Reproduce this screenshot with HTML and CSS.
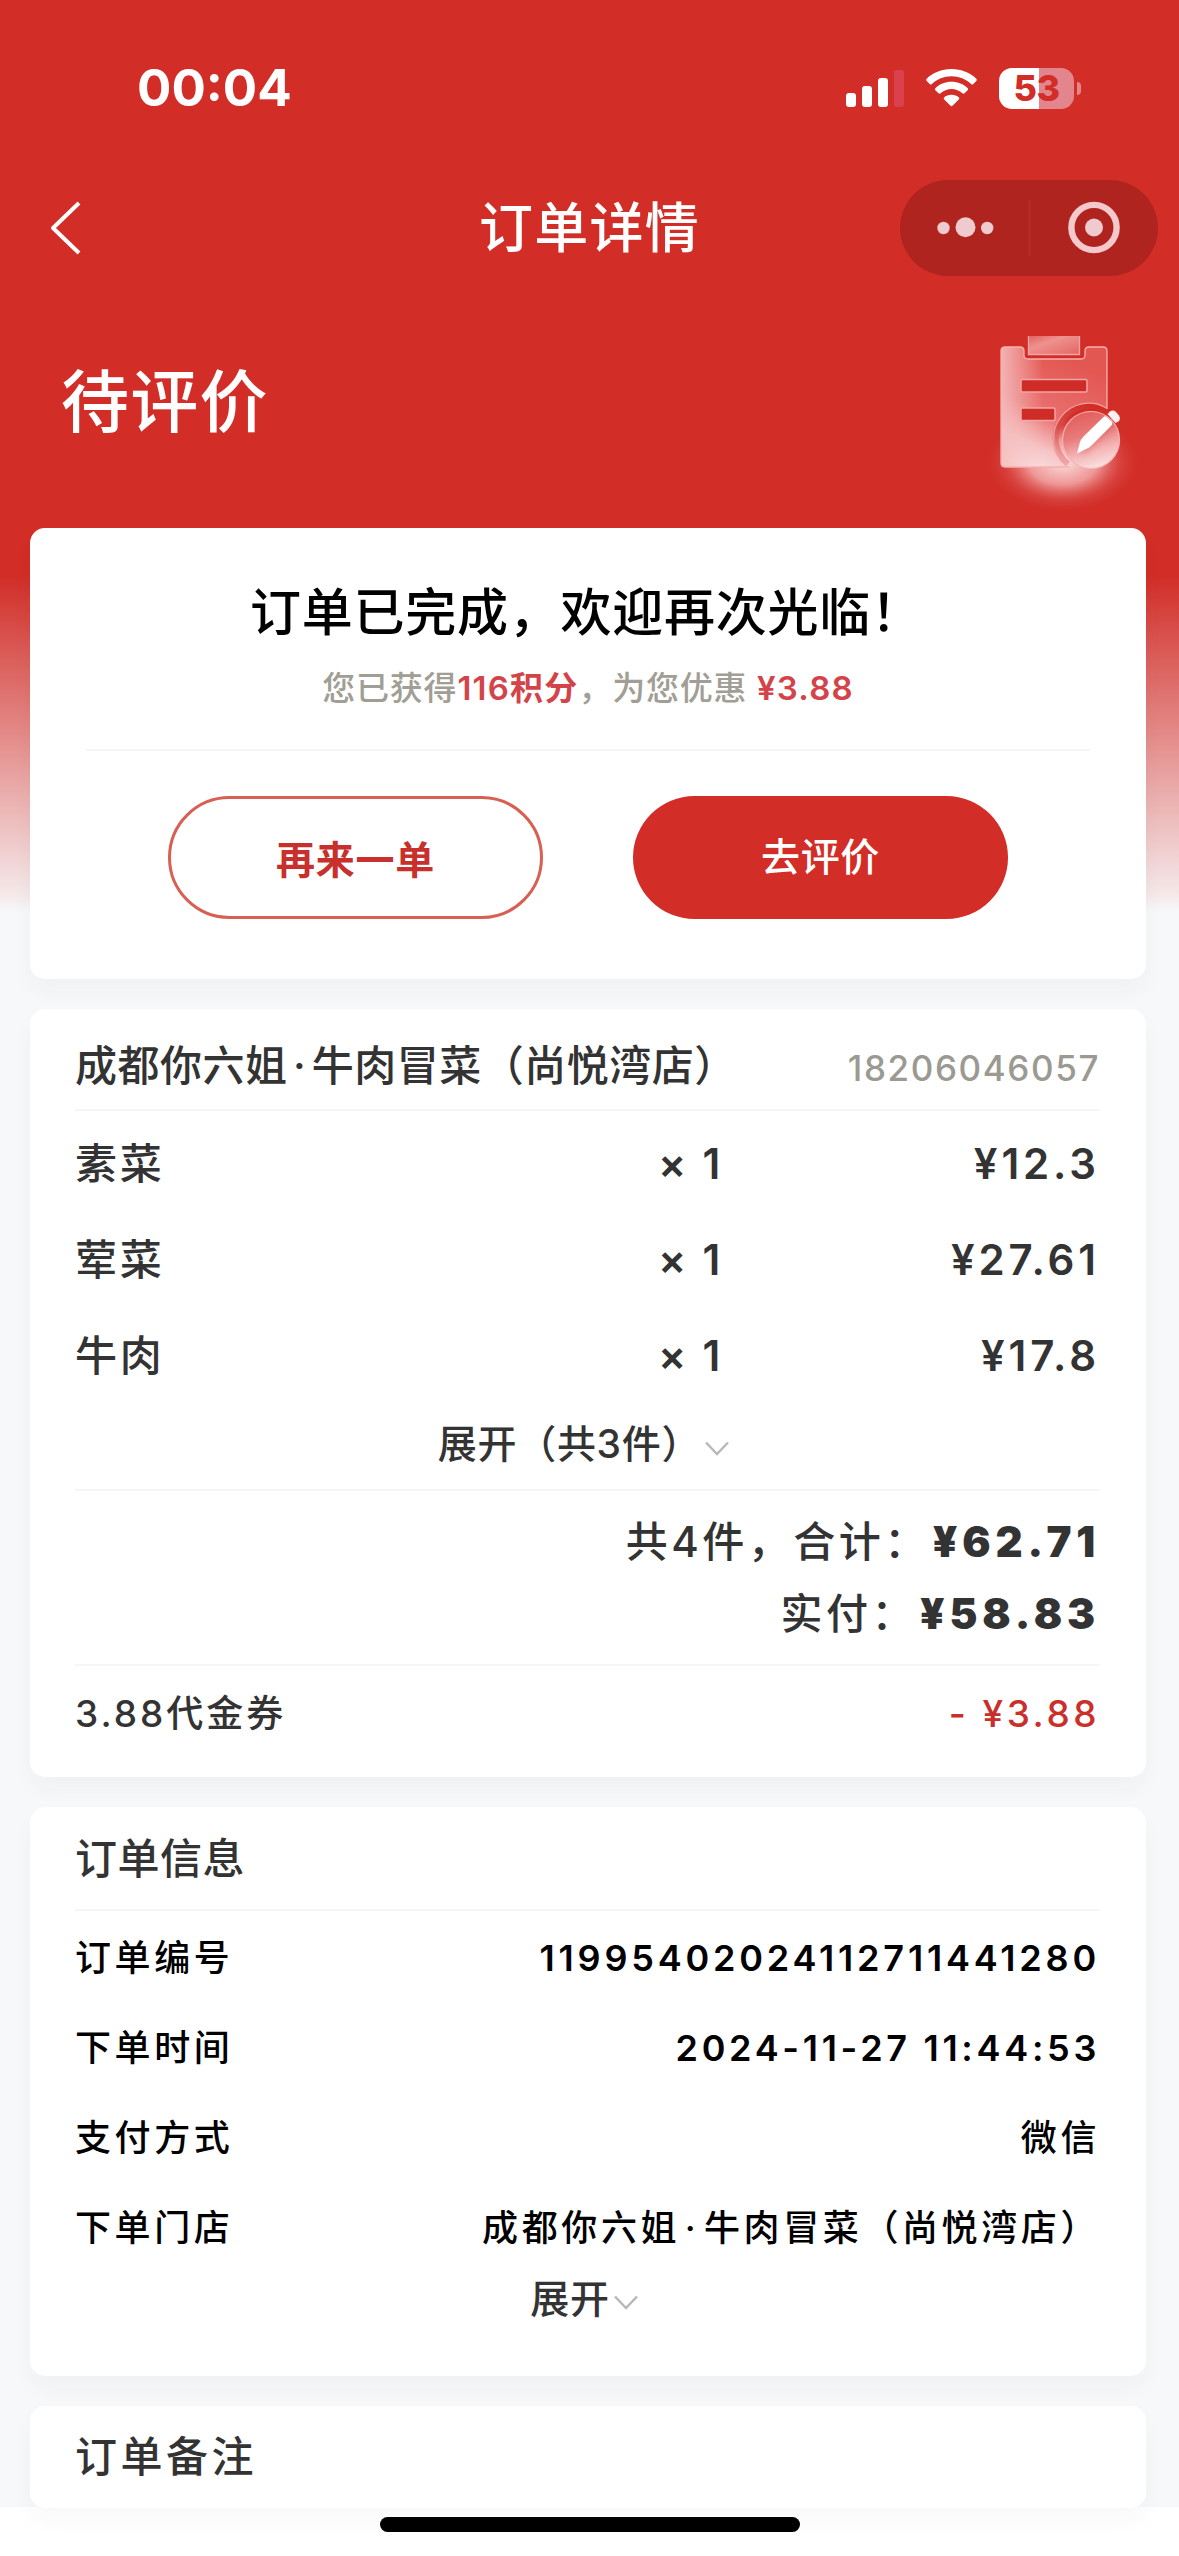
FILE: index.html
```html
<!DOCTYPE html>
<html lang="zh-CN">
<head>
<meta charset="utf-8">
<title>订单详情</title>
<link rel="stylesheet" href="styles.css">
</head>
<body>
<div class="screen">
  <header class="status-bar">
    <span class="clock">00:04</span>
    <div class="status-icons">
      <svg class="signal" width="58" height="37" viewBox="0 0 58 37" fill="#fff">
        <rect x="0" y="23" width="10" height="14" rx="3"/>
        <rect x="16" y="16" width="10" height="21" rx="3"/>
        <rect x="32" y="8" width="10" height="29" rx="3"/>
        <rect x="48" y="0" width="10" height="37" rx="3" fill="#d9424d"/>
      </svg>
      <svg class="wifi" width="51" height="38" viewBox="0 0 51 38" fill="#fff">
        <path d="M25.500 0C35.500 0 44.300 3.800 50.300 9.700Q51.300 10.800 50.300 11.900L47.300 15Q46.200 16 45.100 15C40 10.200 33.100 7.300 25.500 7.300S11 10.200 5.900 15Q4.800 16 3.700 15L.7 11.900Q-.3 10.800.7 9.700C6.700 3.800 15.500 0 25.500 0Z"/>
        <path d="M25.500 12.800C31.900 12.800 37.600 15.200 41.700 19.200Q42.600 20.200 41.600 21.200L38.500 24.300Q37.400 25.200 36.400 24.300C33.500 21.700 29.700 20.100 25.500 20.100S17.500 21.700 14.600 24.300Q13.600 25.200 12.500 24.300L9.400 21.200Q8.400 20.200 9.300 19.200C13.400 15.200 19.100 12.800 25.500 12.800Z"/>
        <path d="M25.500 25.700C28.500 25.700 31 26.700 32.800 28.300Q33.900 29.400 32.800 30.500L26.700 36.600Q25.500 37.700 24.300 36.600L18.200 30.500Q17.100 29.400 18.200 28.300C20 26.700 22.500 25.700 25.500 25.700Z"/>
      </svg>
      <div class="battery"><span class="battery-level">53</span><i class="battery-nub"></i></div>
    </div>
  </header>

  <nav class="nav-bar">
    <svg class="back" width="34" height="56" viewBox="0 0 34 56" fill="none" stroke="#fff" stroke-width="4" stroke-linejoin="round"><path d="M31 3 5 28 31 53"/></svg>
    <h1 class="nav-title">订单详情</h1>
    <div class="capsule">
      <svg width="258" height="96" viewBox="0 0 258 96">
        <g fill="#efcace"><circle cx="43.500" cy="48" r="6.200"/><circle cx="65.500" cy="47.300" r="10"/><circle cx="87.200" cy="48" r="6.200"/><circle cx="194" cy="47.500" r="9"/></g>
        <circle cx="194" cy="47.500" r="22.600" fill="none" stroke="#f4c9cc" stroke-width="6.400"/>
        <path d="M129.500 20V76" stroke="#b92b27" stroke-width="2"/>
      </svg>
    </div>
  </nav>

  <section class="hero">
    <h2 class="hero-title">待评价</h2>
    <svg class="hero-icon" width="200" height="200" viewBox="0 0 200 200">
      <defs>
        <linearGradient id="board" x1=".25" y1="1" x2=".6" y2=".1">
          <stop offset="0" stop-color="#fae0e1"/><stop offset=".2" stop-color="#f6c4c5"/><stop offset=".5" stop-color="#e96f6e"/><stop offset="1" stop-color="#e35752"/>
        </linearGradient>
        <linearGradient id="edge" x1="0" y1="0" x2="1" y2="0">
          <stop offset="0" stop-color="#f5bcbd" stop-opacity=".9"/><stop offset=".4" stop-color="#f5bcbd" stop-opacity="0"/>
        </linearGradient>
        <linearGradient id="clip" x1="0" y1="0" x2="1" y2="1">
          <stop offset="0" stop-color="#e4605e"/><stop offset=".35" stop-color="#ee9290"/><stop offset="1" stop-color="#e46661"/>
        </linearGradient>
        <linearGradient id="badge" x1=".3" y1="0" x2=".6" y2="1">
          <stop offset="0" stop-color="#e25c5a"/><stop offset=".4" stop-color="#e87a79"/><stop offset=".7" stop-color="#f4b4b5"/><stop offset="1" stop-color="#fbe2e3"/>
        </linearGradient>
        <linearGradient id="groove" x1=".7" y1="0" x2=".2" y2="1">
          <stop offset="0" stop-color="#d22d27"/><stop offset=".55" stop-color="#d94c49"/><stop offset="1" stop-color="#f0aaaa"/>
        </linearGradient>
        <radialGradient id="glow"><stop offset="0" stop-color="#fbe0e0"/><stop offset=".45" stop-color="#f3abab" stop-opacity=".85"/><stop offset=".75" stop-color="#e57372" stop-opacity=".3"/><stop offset="1" stop-color="#dc4a49" stop-opacity="0"/></radialGradient>
        <filter id="soft" x="-30%" y="-30%" width="160%" height="160%"><feGaussianBlur stdDeviation="3"/></filter>
        <mask id="cutout">
          <rect width="200" height="200" fill="#fff"/>
          <circle cx="131.500" cy="130" r="35" fill="#000"/>
        </mask>
      </defs>
      <ellipse cx="103" cy="152" rx="76" ry="50" fill="url(#glow)"/>
      <g mask="url(#cutout)">
        <path d="M45 37H60Q64 37 64 41V45Q64 49 68 49H121Q125 49 125 45V41Q125 37 129 37H143Q147 37 147 41V157H45Q41 157 41 153V41Q41 37 45 37Z" fill="url(#board)"/>
        <path d="M45 37H60Q64 37 64 41V45Q64 49 68 49H121Q125 49 125 45V41Q125 37 129 37H143Q147 37 147 41V157H45Q41 157 41 153V41Q41 37 45 37Z" fill="url(#edge)" stroke="#f4b1b0" stroke-width="1.300"/>
        <rect x="61" y="69.500" width="66" height="12.500" rx="1.500" fill="#cf2c28" stroke="#f3a5a4" stroke-width="1.500"/>
        <rect x="61" y="98" width="34" height="12.500" rx="1.500" fill="#cf2c28" stroke="#f3a5a4" stroke-width="1.500"/>
      </g>
      <path d="M108 154A32 32 0 0 1 148 103" fill="none" stroke="url(#groove)" stroke-width="6"/>
      <path d="M106 155A35 35 0 0 1 147 98.500" fill="none" stroke="#f0a09f" stroke-width="1.300"/>
      <rect x="68.500" y="26" width="51" height="18.500" fill="url(#clip)"/>
      <path d="M68.500 26V44.500H119.500V26" fill="none" stroke="#f3a5a4" stroke-width="1.300"/>
      <circle cx="131" cy="130" r="28.500" fill="url(#badge)" stroke="#f4b5b5" stroke-width="1.200"/>
      <path d="M120 142 148 113 152 117 124 144Z" fill="#d23c39" opacity=".45" filter="url(#soft)"/>
      <path d="M117 143.500 120 132Q121 129 124 126L144 106.500Q146 105.500 148 108L152 112Q153 114 151 116L131 136Q129 138 126 139Z" fill="#fff"/>
      <path d="M147.500 104 150 101.500Q153 99.500 156 102L159 105.500Q161 109 158.500 111.500L155.500 113Z" fill="#fff0f0"/>
    </svg>
  </section>

  <main class="cards">
    <section class="card summary">
      <h3 class="summary-title">订单已完成，欢迎再次光临！</h3>
      <p class="summary-note">您已获得<b>116积分</b>，为您优惠 <b>¥3.88</b></p>
      <div class="rule"></div>
      <div class="actions">
        <button class="btn btn-outline">再来一单</button>
        <button class="btn btn-solid">去评价</button>
      </div>
    </section>

    <section class="card order">
      <div class="order-head"><span class="shop">成都你六姐<i class="dot">·</i>牛肉冒菜（尚悦湾店）</span><span class="phone">18206046057</span></div>
      <ul class="items">
        <li class="item"><span>素菜</span><span class="count">× 1</span><span class="price">¥12.3</span></li>
        <li class="item"><span>荤菜</span><span class="count">× 1</span><span class="price">¥27.61</span></li>
        <li class="item"><span>牛肉</span><span class="count">× 1</span><span class="price">¥17.8</span></li>
      </ul>
      <div class="more more-items"><span>展开（共3件）</span><svg class="chevron" width="24" height="15" viewBox="0 0 24 15"><path d="M1 1.500 12 13 23 1.500"/></svg></div>
      <div class="totals">
        <div class="total"><span>共4件，合计：</span><b>¥62.71</b></div>
        <div class="total"><span>实付：</span><b>¥58.83</b></div>
      </div>
      <div class="coupon"><span>3.88代金券</span><span class="discount">- ¥3.88</span></div>
    </section>

    <section class="card info">
      <h3 class="card-title">订单信息</h3>
      <dl class="details">
        <div class="detail"><dt>订单编号</dt><dd class="number">11995402024112711441280</dd></div>
        <div class="detail"><dt>下单时间</dt><dd class="time">2024-11-27 11:44:53</dd></div>
        <div class="detail"><dt>支付方式</dt><dd>微信</dd></div>
        <div class="detail"><dt>下单门店</dt><dd>成都你六姐<i class="dot">·</i>牛肉冒菜（尚悦湾店）</dd></div>
      </dl>
      <div class="more more-info"><span>展开</span><svg class="chevron" width="24" height="15" viewBox="0 0 24 15"><path d="M1 1.500 12 13 23 1.500"/></svg></div>
    </section>

    <section class="card remark"><h3 class="remark-title">订单备注</h3></section>
  </main>
  <footer class="home"><div class="home-bar"></div></footer>
</div>
</body>
</html>
```
FILE: styles.css
```css
* { box-sizing: border-box; margin: 0; padding: 0; }
body {
  width: 1179px;
  height: 2556px;
  overflow: hidden;
  background: #fff;
  color: #333;
  font-family: Inter, "Noto Sans CJK SC", sans-serif;
  font-weight: 500;
  line-height: 1.2;
}
svg { display: block; flex: none; }
h1, h2, h3 { font-weight: 500; }
.screen {
  height: 2556px;
  display: flex;
  flex-direction: column;
  background:
    linear-gradient(#d22d27 0, #d22d27 575px, #f5e9ea 895px, #f7f8fa 912px, #f7f8fa 2507px, #fff 2507px);
}

.status-bar {
  height: 176px;
  padding: 0 105px 0 137px;
  display: flex;
  align-items: center;
  justify-content: space-between;
  color: #fff;
}
.clock { font-size: 51px; font-weight: 700; line-height: 60px; letter-spacing: 0; }
.status-icons { display: flex; align-items: center; height: 41px; }
.wifi { margin: 0 22px; }
.battery {
  position: relative;
  width: 75px;
  height: 41px;
  border-radius: 13px;
  background: linear-gradient(90deg, #fff 40px, #e2858c 40px);
  text-align: center;
}
.battery-level { display: block; color: #d22d27; font-size: 36px; font-weight: 800; line-height: 41px; letter-spacing: -.5px; }
.battery-nub {
  position: absolute;
  left: 78px;
  top: 14px;
  width: 4px;
  height: 13px;
  border-radius: 0 4px 4px 0;
  background: #e2858c;
}

.nav-bar {
  height: 104px;
  padding: 0 21px 0 48px;
  display: grid;
  grid-template-columns: 258px 1fr 258px;
  align-items: center;
}
.nav-title { text-align: center; padding: 2px 27px 0 0; font-size: 54px; line-height: 82px; letter-spacing: 1.200px; color: #fff; }
.capsule { width: 258px; height: 96px; border-radius: 48px; background: #b02420; }

.hero { height: 248px; display: flex; justify-content: space-between; padding: 30px 19px 0 61px; }
.hero-title { margin-top: 42px; font-size: 68px; line-height: 100px; letter-spacing: 1.300px; color: #fff; }
.hero-icon { height: 200px; }

.cards { display: flex; flex-direction: column; padding: 0 33px 0 30px; }
.card {
  border-radius: 15px;
  background: #fff;
  box-shadow: 0 12px 22px rgba(40, 50, 40, .035);
}
.card + .card { margin-top: 30px; }

.summary { height: 451px; padding-top: 49px; text-align: center; }
.summary-title { font-size: 51px; line-height: 72px; letter-spacing: .750px; padding-right: 3px; color: #000; }
.summary-note { margin-top: 14px; font-size: 33px; font-weight: 500; line-height: 50px; letter-spacing: .800px; color: #a19e95; }
.summary-note b { font-weight: 600; color: #d3444a; letter-spacing: 1.200px; }
.rule { height: 2px; margin: 36px 56px 0; background: #f6f6f7; }
.actions { margin-top: 45px; display: flex; justify-content: center; gap: 90px; }
.btn { width: 375px; height: 123px; border-radius: 62px; border: 0; font-family: inherit; font-size: 39px; line-height: 1.2; letter-spacing: .700px; }
.btn-outline { padding-top: 6px; border: 3px solid #d86053; background: #fff; color: #c7302c; font-weight: 700; }
.btn-solid { background: #d22d27; color: #fff; font-weight: 500; }

.order { height: 768px; padding: 0 46px 0 45px; }
.order-head {
  height: 102px;
  padding-top: 15px;
  display: flex;
  align-items: center;
  justify-content: space-between;
  border-bottom: 2px solid #f6f6f7;
}
.shop { font-size: 42px; letter-spacing: .500px; }
.dot { margin: 0 .13em; font-style: normal; }
.phone { padding-top: 3px; font-size: 35px; font-weight: 500; letter-spacing: 1.600px; color: #9b9a92; }
.items { list-style: none; padding-top: 5px; }
.item {
  height: 96px;
  display: grid;
  grid-template-columns: 583px 150px 1fr;
  align-items: center;
  font-size: 42px;
  letter-spacing: 2.800px;
}
.count { font-weight: 600; }
.price { text-align: right; font-weight: 600; letter-spacing: 3.900px; }
.more { display: flex; justify-content: center; align-items: center; font-size: 39px; letter-spacing: .700px; }
.chevron { fill: none; stroke: #b8b8b8; stroke-width: 2.500; }
.more-items { height: 80px; padding-right: 8px; gap: 4px; }
.more-items .chevron { margin-top: 8px; }
.totals { margin-top: 5px; padding: 15px 0; height: 177px; border-top: 2px solid #f6f6f7; border-bottom: 2px solid #f6f6f7; }
.total { height: 72px; display: flex; justify-content: flex-end; align-items: center; font-size: 42px; font-weight: 500; letter-spacing: 3.500px; }
.total b { margin-left: 3px; font-weight: 900; letter-spacing: 4.800px; }
.coupon { height: 96px; display: flex; justify-content: space-between; align-items: center; font-size: 37px; font-weight: 500; letter-spacing: 3px; }
.discount { color: #c9302c; letter-spacing: 3.500px; }

.info { height: 569px; padding: 0 46px 0 45px; }
.card-title { height: 104px; font-size: 42px; line-height: 104px; letter-spacing: .500px; border-bottom: 2px solid #f6f6f7; }
.details { padding-top: 3px; color: #000; }
.detail { height: 90px; display: flex; justify-content: space-between; align-items: center; font-size: 36px; letter-spacing: 3.600px; }
.number { font-weight: 600; letter-spacing: 3.800px; }
.time { font-weight: 600; letter-spacing: 3.700px; }
.more-info { height: 51px; gap: 4px; padding-right: 7px; }
.more-info .chevron { margin-top: 6px; }
.remark { height: 102px; padding: 0 46px 0 45px; }
.remark-title { font-size: 42px; line-height: 102px; letter-spacing: 3.500px; }
.home { padding-top: 9px; display: flex; justify-content: center; }
.home-bar { width: 420px; height: 15px; border-radius: 8px; background: #000; }
```
